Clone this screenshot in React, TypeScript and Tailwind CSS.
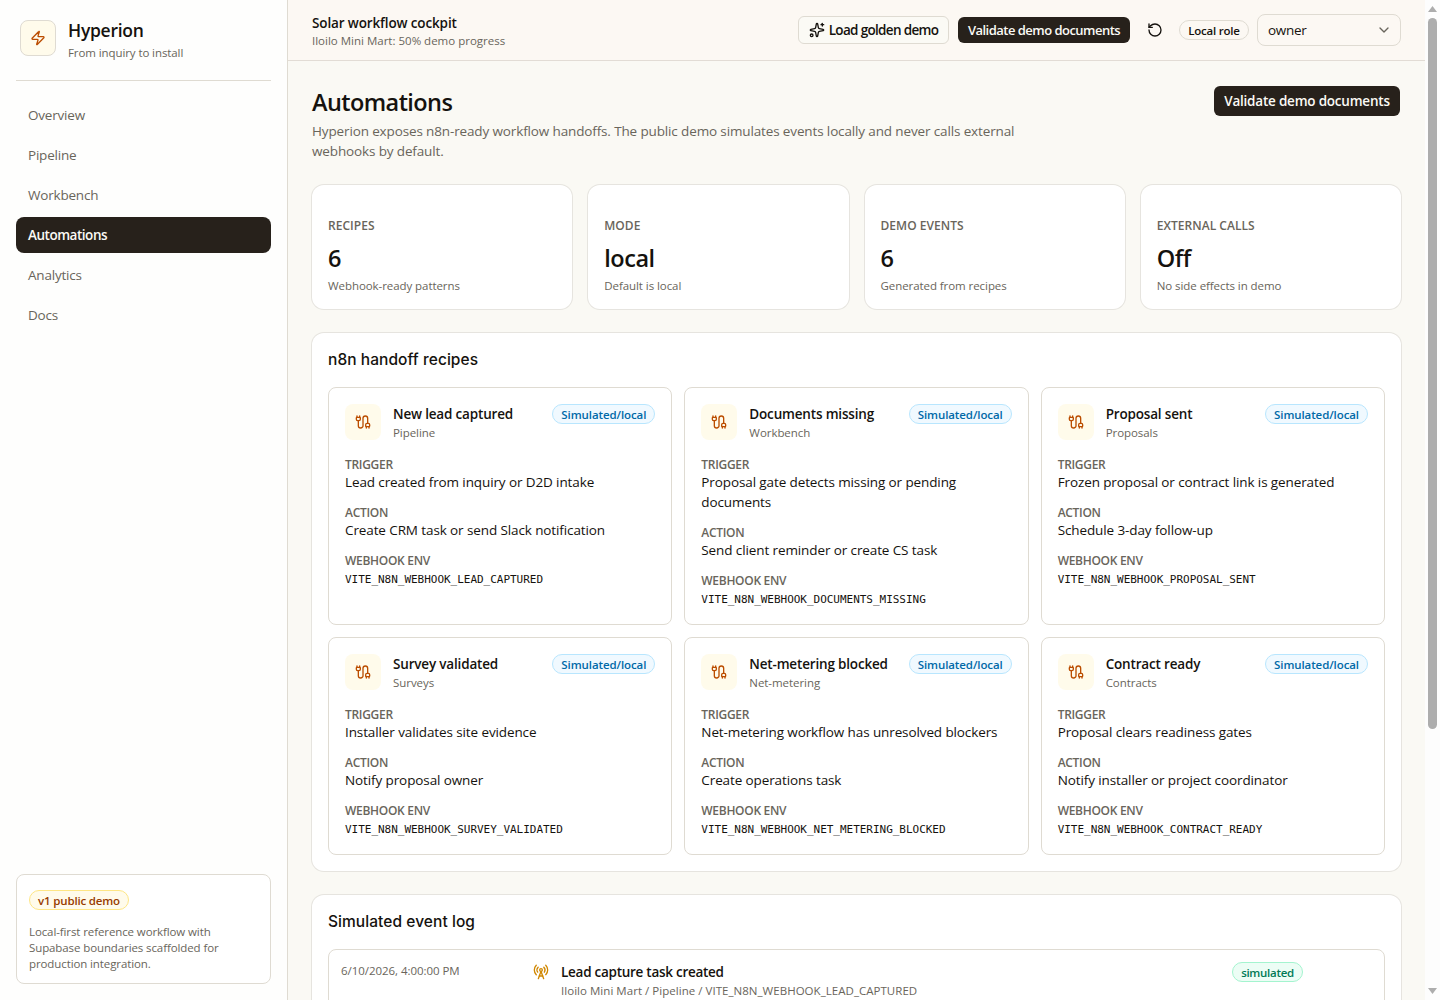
import React from 'react';
import { Cable, ChevronDown, RadioTower, RotateCcw, Sparkles, Zap } from 'lucide-react';

const navItems = ['Overview', 'Pipeline', 'Workbench', 'Automations', 'Analytics', 'Docs'];

const stats = [
  { label: 'Recipes', value: '6', helper: 'Webhook-ready patterns' },
  { label: 'Mode', value: 'local', helper: 'Default is local' },
  { label: 'Demo events', value: '6', helper: 'Generated from recipes' },
  { label: 'External calls', value: 'Off', helper: 'No side effects in demo' },
];

const recipes = [
  {
    title: 'New lead captured',
    area: 'Pipeline',
    trigger: 'Lead created from inquiry or D2D intake',
    action: 'Create CRM task or send Slack notification',
    env: 'VITE_N8N_WEBHOOK_LEAD_CAPTURED',
  },
  {
    title: 'Documents missing',
    area: 'Workbench',
    trigger: 'Proposal gate detects missing or pending documents',
    action: 'Send client reminder or create CS task',
    env: 'VITE_N8N_WEBHOOK_DOCUMENTS_MISSING',
  },
  {
    title: 'Proposal sent',
    area: 'Proposals',
    trigger: 'Frozen proposal or contract link is generated',
    action: 'Schedule 3-day follow-up',
    env: 'VITE_N8N_WEBHOOK_PROPOSAL_SENT',
  },
  {
    title: 'Survey validated',
    area: 'Surveys',
    trigger: 'Installer validates site evidence',
    action: 'Notify proposal owner',
    env: 'VITE_N8N_WEBHOOK_SURVEY_VALIDATED',
  },
  {
    title: 'Net-metering blocked',
    area: 'Net-metering',
    trigger: 'Net-metering workflow has unresolved blockers',
    action: 'Create operations task',
    env: 'VITE_N8N_WEBHOOK_NET_METERING_BLOCKED',
  },
  {
    title: 'Contract ready',
    area: 'Contracts',
    trigger: 'Proposal clears readiness gates',
    action: 'Notify installer or project coordinator',
    env: 'VITE_N8N_WEBHOOK_CONTRACT_READY',
  },
];

function Sidebar() {
  return (
    <aside className="flex w-72 shrink-0 flex-col border-r border-[#dfdbd2] bg-[#fefefd] p-4">
      <div className="flex h-[65px] items-start gap-3 border-b border-[#dfdbd2] px-1 pt-1">
        <div className="flex size-9 items-center justify-center rounded-lg border border-[#dfdbd2] bg-[#fffbeb] text-[#bb4d00]">
          <Zap size={16} />
        </div>
        <div>
          <p className="text-[17.5px] leading-[21px] font-semibold tracking-[-0.015em]">Hyperion</p>
          <p className="mt-1 text-[11.5px] leading-4 tracking-[-0.008em] text-[#69655b]">From inquiry to install</p>
        </div>
      </div>
      <nav className="mt-4 flex flex-col gap-1">
        {navItems.map((item) => (
          <a
            key={item}
            className={
              item === 'Automations'
                ? 'flex h-9 items-center rounded-lg bg-[#27211b] px-3 text-[13.5px] font-semibold tracking-[-0.035em] text-[#fbfaf5]'
                : 'flex h-9 items-center rounded-lg px-3 text-[13.5px] tracking-[-0.015em] text-[#69655b]'
            }
          >
            {item}
          </a>
        ))}
      </nav>
      <div className="mt-auto rounded-lg border border-[#dfdbd2] bg-white px-3 pt-[15px] pb-[11px]">
        <span className="flex h-5 w-[100px] items-center justify-center rounded-full border border-[#fee685] bg-[#fffbeb] pt-px text-[11.5px] font-semibold tracking-[-0.015em] text-[#973c00]">
          v1 public demo
        </span>
        <p className="mt-3.5 text-[11.5px] leading-4 tracking-[-0.009em] text-[#69655b]">
          Local-first reference workflow with
          <br />
          Supabase boundaries scaffolded for
          <br />
          production integration.
        </p>
      </div>
    </aside>
  );
}

function Header() {
  return (
    <header className="flex h-[61px] shrink-0 items-center justify-between border-b border-[#e2dcd5] bg-[#fcf8f3] px-6">
      <div>
        <p className="pt-px text-[13.5px] leading-5 font-semibold tracking-[-0.01em]">Solar workflow cockpit</p>
        <p className="text-[11.5px] leading-4 text-[#69655b]">Iloilo Mini Mart: 50% demo progress</p>
      </div>
      <div className="flex items-center gap-2">
        <button className="flex h-7 w-[151px] items-center justify-center gap-1 rounded-md border border-[#dfdbd2] bg-[#fbfaf5] text-[13.5px] font-semibold tracking-[-0.05em] whitespace-nowrap">
          <Sparkles size={16} />
          Load golden demo
        </button>
        <button className="mx-px flex h-[26px] w-[172px] items-center justify-center rounded-md bg-[#27211b] text-[13px] font-semibold tracking-[-0.04em] whitespace-nowrap text-[#fbfaf5]">
          <span className="pt-px">Validate demo documents</span>
        </button>
        <button className="flex h-7 w-8 items-center justify-center">
          <RotateCcw size={16} />
        </button>
        <span className="flex h-5 w-[70px] items-center justify-center rounded-full border border-[#dfdbd2] pt-px text-[11.5px] font-semibold tracking-[-0.02em] whitespace-nowrap">
          Local role
        </span>
        <button className="flex h-8 w-36 items-center justify-between rounded-lg border border-[#dfdbd2] pr-2 pl-2.5 text-[13.5px] tracking-[-0.02em]">
          owner
          <ChevronDown size={16} className="text-[#69655b]" />
        </button>
      </div>
    </header>
  );
}

function Card({ title, children }: { title?: string; children: React.ReactNode }) {
  return (
    <section className="rounded-xl bg-white p-4 ring-1 ring-[#e6e4df]">
      {title && (
        <h2 className="mb-[17px] font-['Inter'] text-[15.5px] leading-[21px] font-medium tracking-[0.004em]">{title}</h2>
      )}
      {children}
    </section>
  );
}

function Field({ label, children }: { label: string; children: React.ReactNode }) {
  return (
    <div>
      <p className="pt-px text-xs leading-[15px] font-semibold tracking-[-0.025em] text-[#69655b] uppercase">{label}</p>
      {children}
    </div>
  );
}

function RecipeCard({ recipe }: { recipe: (typeof recipes)[number] }) {
  return (
    <article className="rounded-lg border border-[#dfdbd2] bg-white p-4">
      <div className="flex items-start gap-3">
        <div className="flex size-9 items-center justify-center rounded-lg bg-[#fffbeb] text-[#bb4d00]">
          <Cable size={16} />
        </div>
        <div className="flex-1">
          <h3 className="text-[13.5px] leading-5 font-semibold tracking-[-0.013em]">{recipe.title}</h3>
          <p className="pt-px text-[11.5px] leading-[15px] tracking-[-0.005em] text-[#69655b]">{recipe.area}</p>
        </div>
        <span className="flex h-5 w-[103px] items-center justify-center rounded-full border border-[#b8e6fe] bg-[#f0f9ff] pt-px text-[11.5px] font-semibold tracking-[-0.008em] text-[#0069a8]">
          Simulated/local
        </span>
      </div>
      <div className="mt-4 flex flex-col gap-3">
        <Field label="Trigger">
          <p className="text-[13.5px] leading-5 tracking-[-0.008em]">{recipe.trigger}</p>
        </Field>
        <Field label="Action">
          <p className="text-[13.5px] leading-5 tracking-[-0.008em]">{recipe.action}</p>
        </Field>
        <Field label="Webhook env">
          <code className="block pt-1 font-['DejaVu_Sans_Mono'] text-[11px] leading-4 tracking-[-0.002em]">
            {recipe.env}
          </code>
        </Field>
      </div>
    </article>
  );
}

function EventLog() {
  return (
    <div className="grid h-[66px] grid-cols-[180px_1fr_140px] gap-3 rounded-lg border border-[#dfdbd2] p-3">
      <p className="pt-px text-[11.5px] leading-4 tracking-[-0.004em] text-[#69655b]">6/10/2026, 4:00:00 PM</p>
      <div className="flex items-start gap-3">
        <RadioTower size={16} className="mt-0.5 text-[#d08700]" />
        <div>
          <p className="text-[13.5px] leading-5 font-semibold tracking-[-0.02em]">Lead capture task created</p>
          <p className="pt-px text-[11.5px] leading-[15px] tracking-[0.003em] text-[#69655b]">
            Iloilo Mini Mart / Pipeline / VITE_N8N_WEBHOOK_LEAD_CAPTURED
          </p>
        </div>
      </div>
      <span className="flex h-5 w-[71px] items-center justify-center rounded-full border border-[#a4f4cf] bg-[#ecfdf5] pt-px text-[11.5px] font-semibold tracking-[-0.025em] text-[#007a55]">
        simulated
      </span>
    </div>
  );
}

function Scrollbar() {
  return (
    <div className="flex w-[15px] shrink-0 flex-col items-center bg-[#fdfdfd] py-1.5">
      <svg width="9" height="6" viewBox="0 0 9 6" fill="#adadad">
        <path d="M4.5 0 9 6H0z" />
      </svg>
      <div className="mt-1.5 h-[711px] w-[9px] rounded-full bg-[#adadad]" />
      <svg className="mt-auto" width="9" height="6" viewBox="0 0 9 6" fill="#adadad">
        <path d="M4.5 6 0 0h9z" />
      </svg>
    </div>
  );
}

export default function App() {
  return (
    <div className="flex h-[1000px] w-[1440px] overflow-hidden bg-[#faf9f4] font-['Open_Sans',sans-serif] text-[#15120e]">
      <Sidebar />
      <div className="flex min-w-0 flex-1 flex-col overflow-hidden">
        <Header />
        <main className="flex flex-col gap-6 p-6">
          <div className="flex items-start justify-between">
            <div>
              <h1 className="pt-0.5 text-[23.5px] leading-[30px] font-semibold tracking-[-0.025em]">Automations</h1>
              <p className="mt-1 text-[13.5px] leading-5 tracking-[-0.01em] text-[#69655b]">
                Hyperion exposes n8n-ready workflow handoffs. The public demo simulates events locally and never calls
                external
                <br />
                webhooks by default.
              </p>
            </div>
            <button className="mt-px mr-px flex h-[30px] w-[186px] shrink-0 items-center justify-center rounded-md bg-[#27211b] text-[13.5px] font-semibold tracking-[-0.016em] whitespace-nowrap text-[#fbfaf5]">
              Validate demo documents
            </button>
          </div>
          <div className="grid grid-cols-4 gap-4">
            {stats.map((stat) => (
              <Card key={stat.label}>
                <p className="pt-[17px] text-xs leading-[15px] font-semibold tracking-[0.003em] text-[#69655b] uppercase">
                  {stat.label}
                </p>
                <p className="mt-2 pt-0.5 text-[23.5px] leading-[30px] font-semibold tracking-[-0.02em]">{stat.value}</p>
                <p className="mt-1 pt-px text-[11.5px] leading-[15px] tracking-[-0.006em] text-[#69655b]">
                  {stat.helper}
                </p>
              </Card>
            ))}
          </div>
          <Card title="n8n handoff recipes">
            <div className="grid grid-cols-3 gap-3">
              {recipes.map((recipe) => (
                <RecipeCard key={recipe.title} recipe={recipe} />
              ))}
            </div>
          </Card>
          <Card title="Simulated event log">
            <EventLog />
          </Card>
        </main>
      </div>
      <Scrollbar />
    </div>
  );
}
